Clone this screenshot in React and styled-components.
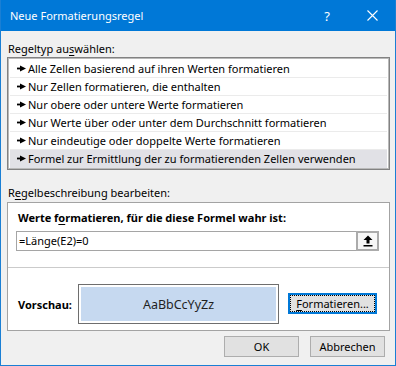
import React from "react";
import styled, { createGlobalStyle } from "styled-components";

const GlobalStyle = createGlobalStyle`
  html, body {
    margin: 0;
    padding: 0;
    background: #f0f0f0;
  }
  body {
    font-family: "Noto Sans", "Liberation Sans", sans-serif;
    font-size: 11px;
    color: #000;
  }
  * {
    box-sizing: border-box;
  }
`;

const Window = styled.div`
  width: 396px;
  height: 366px;
  border: 1px solid #1a7fd4;
  border-top: none;
  background: #f0f0f0;
  display: flex;
  flex-direction: column;
`;

const TitleBar = styled.div`
  height: 31px;
  flex: none;
  background: #0078d7;
  color: #fff;
  display: flex;
  align-items: center;
  padding-left: 9px;
`;

const Title = styled.span`
  flex: 1;
  font-size: 11px;
  line-height: 16px;
`;

const TitleButton = styled.div`
  width: ${(props) => props.w}px;
  height: 31px;
  display: flex;
  align-items: center;
  justify-content: center;
  font-size: 13px;
  color: #fff;
`;

const Content = styled.div`
  flex: 1;
  padding: 10px 5px 0 6px;
  display: flex;
  flex-direction: column;
`;

const SectionLabel = styled.div`
  line-height: 16px;
  height: 16px;
  padding-left: 1px;
  margin-top: ${(props) => props.top || 0}px;
  font-weight: ${(props) => (props.bold ? 700 : 400)};
`;

const Key = styled.span`
  text-decoration: underline;
  text-underline-offset: 2px;
  text-decoration-thickness: 1px;
`;

const RuleList = styled.div`
  border: 1px solid #828282;
  box-shadow: inset 0 0 0 1px #b9b9b9;
  background: #fff;
  padding: 2px 0 1px;
`;

const RuleRow = styled.div`
  height: 18px;
  margin: 0 2px;
  padding-left: 7px;
  display: flex;
  align-items: center;
  gap: 2px;
  background: ${(props) => (props.selected ? "#e1e1e6" : "transparent")};
  border-bottom: 1px solid ${(props) => (props.last ? "transparent" : "#ebebeb")};
  white-space: nowrap;
`;

const Panel = styled.div`
  margin-top: 1px;
  background: #fff;
  border: 1px solid #a3a3a3;
  padding: 7px 10px 6px 9px;
  display: flex;
  flex-direction: column;
`;

const FormulaField = styled.div`
  margin: 5px 0 0 -1px;
  height: 20px;
  border: 1px solid #a5a5a5;
  display: flex;
  align-items: stretch;
`;

const FormulaText = styled.div`
  flex: 1;
  padding-left: 2px;
  line-height: 18px;
`;

const CollapseButton = styled.div`
  width: 23px;
  margin: -1px -1px -1px 0;
  border: 2px solid #ababab;
  background: #f7f7f7;
  display: flex;
  align-items: center;
  justify-content: center;
`;

const Divider = styled.div`
  height: 1px;
  background: #cbcbcb;
  margin: 16px -10px 0 -9px;
`;

const PreviewRow = styled.div`
  margin-top: 16px;
  display: flex;
  align-items: center;
`;

const PreviewLabel = styled.div`
  width: 61px;
  padding-left: 1px;
  font-weight: 700;
`;

const PreviewBox = styled.div`
  width: 201px;
  height: 40px;
  border: 1px solid #6e6e6e;
  padding: 2px;
  background: #fff;
`;

const PreviewFill = styled.div`
  height: 100%;
  background: #c6d9f0;
  display: flex;
  align-items: center;
  justify-content: center;
  font-size: 12.5px;
  color: #1f1f1f;
`;

const Button = styled.div`
  position: relative;
  width: ${(props) => props.w}px;
  height: 21px;
  background: #e1e1e1;
  border: ${(props) => (props.focused ? "2px solid #0078d7" : "1px solid #adadad")};
  display: flex;
  align-items: center;
  justify-content: center;
  white-space: nowrap;
  &::after {
    content: "";
    display: ${(props) => (props.focused ? "block" : "none")};
    position: absolute;
    inset: 0;
    border: 1px dotted #000;
  }
`;

const FormatButton = styled(Button)`
  margin-left: 9px;
  margin-top: -2px;
`;

const Footer = styled.div`
  margin-top: 5px;
  padding-right: 5px;
  display: flex;
  justify-content: flex-end;
  gap: 11px;
`;

const ruleTypes = [
  "Alle Zellen basierend auf ihren Werten formatieren",
  "Nur Zellen formatieren, die enthalten",
  "Nur obere oder untere Werte formatieren",
  "Nur Werte über oder unter dem Durchschnitt formatieren",
  "Nur eindeutige oder doppelte Werte formatieren",
  "Formel zur Ermittlung der zu formatierenden Zellen verwenden",
];

const RuleArrow = () => (
  <svg width="9" height="7" viewBox="0 0 9 7">
    <rect x="0" y="2.6" width="4" height="1.8" fill="#000" />
    <polygon points="3,0.4 9,3.5 3,6.6" fill="#000" />
  </svg>
);

const UploadArrow = () => (
  <svg width="10" height="12" viewBox="0 0 10 12">
    <polygon points="5,0.5 9.5,5 6.5,5 6.5,8.5 3.5,8.5 3.5,5 0.5,5" fill="#000" />
    <rect x="0.5" y="10" width="9" height="1.5" fill="#000" />
  </svg>
);

const CloseIcon = () => (
  <svg width="11" height="11" viewBox="0 0 11 11">
    <path d="M0.5 0.5 L10.5 10.5 M10.5 0.5 L0.5 10.5" stroke="#fff" strokeWidth="1.1" />
  </svg>
);

export default function App() {
  return (
    <>
      <GlobalStyle />
      <Window>
        <TitleBar>
          <Title>Neue Formatierungsregel</Title>
          <TitleButton w={44}>?</TitleButton>
          <TitleButton w={46}>
            <CloseIcon />
          </TitleButton>
        </TitleBar>
        <Content>
          <SectionLabel>
            Regeltyp au<Key>s</Key>wählen:
          </SectionLabel>
          <RuleList>
            {ruleTypes.map((rule, index) => (
              <RuleRow
                key={`rule-${index}`}
                selected={index === ruleTypes.length - 1}
                last={index === ruleTypes.length - 1}
              >
                <RuleArrow />
                {rule}
              </RuleRow>
            ))}
          </RuleList>
          <SectionLabel top={15}>
            R<Key>e</Key>gelbeschreibung bearbeiten:
          </SectionLabel>
          <Panel>
            <SectionLabel bold>
              Werte f<Key>o</Key>rmatieren, für die diese Formel wahr ist:
            </SectionLabel>
            <FormulaField>
              <FormulaText>=Länge(E2)=0</FormulaText>
              <CollapseButton>
                <UploadArrow />
              </CollapseButton>
            </FormulaField>
            <Divider />
            <PreviewRow>
              <PreviewLabel>Vorschau:</PreviewLabel>
              <PreviewBox>
                <PreviewFill>AaBbCcYyZz</PreviewFill>
              </PreviewBox>
              <FormatButton w={89} focused>
                <span>
                  <Key>F</Key>ormatieren...
                </span>
              </FormatButton>
            </PreviewRow>
          </Panel>
          <Footer>
            <Button w={75}>OK</Button>
            <Button w={75}>Abbrechen</Button>
          </Footer>
        </Content>
      </Window>
    </>
  );
}
